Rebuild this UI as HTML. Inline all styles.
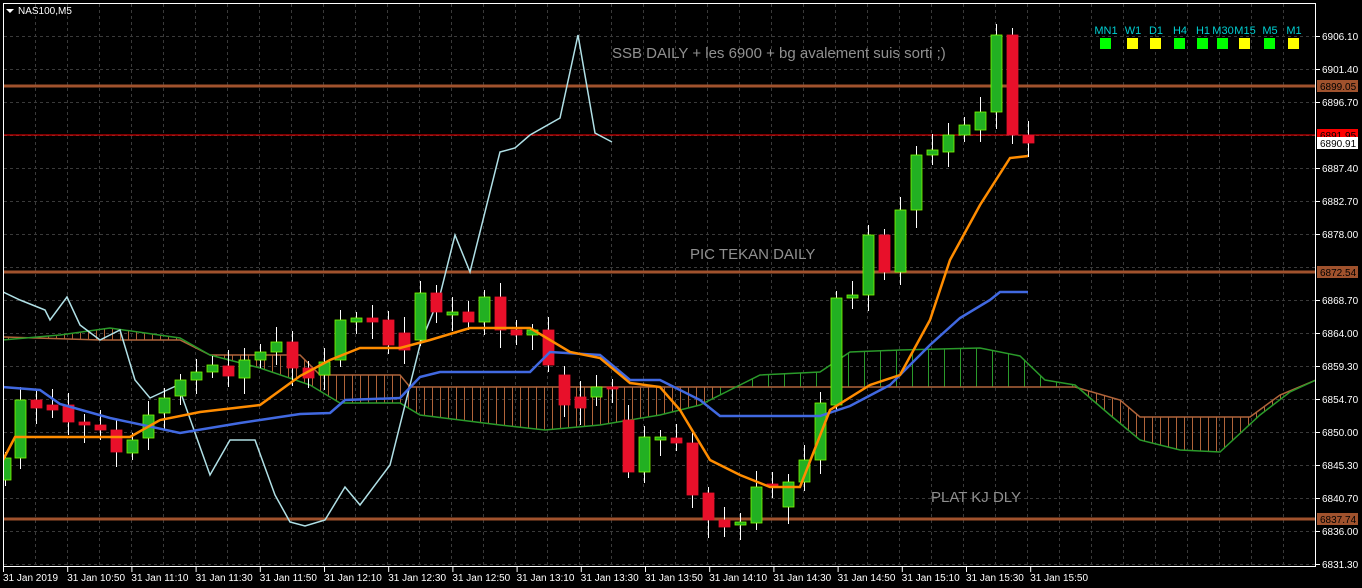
<!DOCTYPE html>
<html><head><meta charset="utf-8"><style>
html,body{margin:0;padding:0;background:#000;width:1362px;height:588px;overflow:hidden}
svg{display:block}
text{font-family:"Liberation Sans",sans-serif}
</style></head><body>
<svg id="s" width="1362" height="588" xmlns="http://www.w3.org/2000/svg">
<defs>
<pattern id="hb" width="8" height="10" patternUnits="userSpaceOnUse"><rect x="0" width="1" height="10" fill="#b0643a"/></pattern>
<pattern id="hg" width="16" height="10" patternUnits="userSpaceOnUse"><rect x="0" width="1" height="10" fill="#2a9a2a"/></pattern>
<clipPath id="cl"><rect x="4" y="4" width="1311" height="562"/></clipPath>
<clipPath id="cL"><rect x="4" y="4" width="716" height="562"/><rect x="1075" y="4" width="240" height="562"/></clipPath>
<clipPath id="cR"><rect x="720" y="4" width="355" height="562"/></clipPath>
</defs>
<g id="grid"></g>
<g clip-path="url(#cl)" id="chart"></g>
<rect x="3.5" y="3.5" width="1312" height="563" fill="none" stroke="#fff" stroke-width="1"/>
<path d="M6 9h8l-4 4z" fill="#fff"/>
<text x="18" y="14" font-size="10" fill="#fff">NAS100,M5</text>
<g id="ax"></g>
</svg>
<script>
var S=document.getElementById('s'),NS='http://www.w3.org/2000/svg';
function el(p,t,a,txt){var e=document.createElementNS(NS,t);for(var k in a)e.setAttribute(k,a[k]);if(txt!=null)e.textContent=txt;document.getElementById(p).appendChild(e);return e;}
for(var x=35;x<1315;x+=32)el('grid','line',{x1:x+.5,y1:4,x2:x+.5,y2:566,stroke:'#3a3a3a','stroke-dasharray':'3,3'});
var hy=[36,69,102,135,168,201,234,267,300,333,366,399,432,465,498,531,564];
hy.forEach(function(y){el('grid','line',{x1:4,y1:y+.5,x2:1315,y2:y+.5,stroke:'#3a3a3a','stroke-dasharray':'3,3'});});
function pl(pts){return pts.map(function(p){return p.join(',')}).join(' ');}
var B=[[3,337],[100,340],[180,340],[210,355],[300,355],[320,375],[400,375],[410,387],[1075,387],[1120,400],[1140,417],[1250,417],[1280,395],[1316,380]];
var A=[[3,340],[60,335],[110,328],[180,338],[210,355],[260,368],[310,385],[340,403],[400,403],[420,415],[500,425],[545,430],[600,425],[660,415],[700,405],[730,390],[760,375],[820,372],[850,352],[900,350],[980,348],[1020,356],[1045,380],[1075,385],[1110,415],[1140,440],[1180,450],[1220,452],[1260,415],[1290,392],[1316,380]];
var poly=A.concat(B.slice().reverse());
el('chart','polygon',{points:pl(poly),fill:'url(#hb)','clip-path':'url(#cL)'});
el('chart','polygon',{points:pl(poly),fill:'url(#hg)','clip-path':'url(#cR)'});
el('chart','polyline',{points:pl(B),fill:'none',stroke:'#b0643a','stroke-width':1.5});
el('chart','polyline',{points:pl(A),fill:'none',stroke:'#2a9a2a','stroke-width':1.5});
[[86,'#a0522d',3],[272,'#a0522d',3],[519,'#a0522d',3],[135,'#ff0000',1]].forEach(function(h){el('chart','line',{x1:4,y1:h[0],x2:1316,y2:h[0],stroke:h[1],'stroke-width':h[2]});});
el('chart','polyline',{points:pl([[3,292],[20,300],[45,310],[50,320],[67,297],[80,325],[100,340],[120,330],[135,380],[150,398],[178,385],[210,475],[230,440],[255,440],[275,495],[290,522],[305,526],[325,520],[345,487],[360,505],[390,465],[420,345],[440,295],[455,235],[470,272],[500,152],[515,148],[530,135],[560,118],[578,35],[595,133],[612,142]]),fill:'none',stroke:'#b0e0e6','stroke-width':1.5});
var C=[[5,480,458],[20,458,400],[36,400,408],[52,405,410],[68,405,422],[84,422,425],[100,425,430],[116,430,452],[132,453,440],[148,438,415],[164,413,398],[180,396,380],[196,380,372],[212,372,365],[228,366,376],[244,378,360],[260,360,352],[276,352,342],[292,342,368],[308,368,378],[324,375,362],[340,360,320],[356,322,318],[372,318,322],[388,320,345],[404,333,350],[420,340,293],[436,293,312],[452,315,312],[468,312,322],[484,322,297],[500,297,330],[516,330,335],[532,335,330],[548,330,365],[564,375,405],[580,397,408],[596,397,387],[612,387,389],[628,420,472],[644,472,437],[660,440,437],[676,438,443],[692,443,495],[708,493,520],[724,520,527],[740,525,522],[756,523,487],[772,484,486],[788,507,482],[804,482,460],[820,460,403],[836,405,298],[852,298,295],[868,295,235],[884,235,272],[900,272,210],[916,210,155],[932,155,150],[948,152,135],[964,135,125],[980,130,112],[996,112,35],[1012,35,135],[1028,135,143]];
C.forEach(function(c,i){var up=c[2]<c[1];var t=Math.min(c[1],c[2]),b=Math.max(c[1],c[2]);if(b-t<2)b=t+2;
var hi=t-6-(i*7%11),lo=b+6+(i*5%13);
el('chart','line',{x1:c[0]+.5,y1:hi,x2:c[0]+.5,y2:lo,stroke:'#fff','stroke-width':1});
el('chart','rect',{x:c[0]-5,y:t,width:11,height:b-t,fill:up?'#22b022':'#e8102a',stroke:up?'#7cfc00':'#e8102a','stroke-width':0.8});});
el('chart','polyline',{points:pl([[3,387],[40,390],[60,404],[110,418],[180,433],[240,423],[260,420],[300,414],[330,413],[345,400],[400,398],[420,377],[440,372],[530,372],[550,352],[600,355],[630,380],[660,380],[700,400],[720,416],[820,416],[850,406],[890,385],[930,345],[960,318],[990,300],[1000,292],[1028,292]]),fill:'none',stroke:'#4169e1','stroke-width':2.5});
el('chart','polyline',{points:pl([[3,460],[15,437],[130,437],[160,420],[200,412],[260,405],[300,376],[330,360],[360,348],[400,348],[430,340],[470,328],[530,328],[570,352],[600,358],[630,383],[660,387],[680,410],[710,460],[740,475],[770,487],[800,487],[830,410],[870,385],[900,375],[930,320],[950,260],[980,205],[1010,158],[1028,156]]),fill:'none',stroke:'#ff8c00','stroke-width':2.5});
el('chart','text',{x:612,y:58,'font-size':15,fill:'#909090'},'SSB DAILY + les 6900 + bg avalement  suis sorti ;)');
el('chart','text',{x:690,y:259,'font-size':15,fill:'#909090'},'PIC TEKAN DAILY');
el('chart','text',{x:931,y:502,'font-size':15,fill:'#909090'},'PLAT KJ DLY');
var L=['MN1','W1','D1','H4','H1','M30','M15','M5','M1'],X=[1106,1133,1156,1180,1203,1223,1245,1270,1294],Cc=['#00ff00','#ffff00','#ffff00','#00ff00','#00ff00','#00ff00','#ffff00','#00ff00','#ffff00'];
L.forEach(function(l,i){el('chart','text',{x:X[i],y:34,'font-size':11,fill:'#00ced1','text-anchor':'middle'},l);el('chart','rect',{x:X[i]-6,y:38,width:11,height:11,fill:Cc[i]});});
var P=[[36,'6906.10'],[69,'6901.40'],[102,'6896.70'],[168,'6887.40'],[201,'6882.70'],[234,'6878.00'],[300,'6868.70'],[333,'6864.00'],[366,'6859.30'],[399,'6854.70'],[432,'6850.00'],[465,'6845.30'],[498,'6840.70'],[531,'6836.00'],[564,'6831.30']];
P.forEach(function(p){el('ax','line',{x1:1316,y1:p[0]+.5,x2:1320,y2:p[0]+.5,stroke:'#fff'});el('ax','text',{x:1322,y:p[0]+4,'font-size':10,fill:'#fff'},p[1]);});
[[86,'6899.05','#a0522d','#000'],[272,'6872.54','#a0522d','#000'],[519,'6837.74','#a0522d','#000'],[135,'6891.95','#ff0000','#000'],[143,'6890.91','#fff','#000']].forEach(function(b){el('ax','rect',{x:1317,y:b[0]-6,width:41,height:12,fill:b[2]});el('ax','text',{x:1320,y:b[0]+4,'font-size':10,fill:b[3]},b[1]);});
var T=['31 Jan 2019','31 Jan 10:50','31 Jan 11:10','31 Jan 11:30','31 Jan 11:50','31 Jan 12:10','31 Jan 12:30','31 Jan 12:50','31 Jan 13:10','31 Jan 13:30','31 Jan 13:50','31 Jan 14:10','31 Jan 14:30','31 Jan 14:50','31 Jan 15:10','31 Jan 15:30','31 Jan 15:50'];
T.forEach(function(t,i){var x=3+i*64.2;el('ax','line',{x1:x+.5,y1:567,x2:x+.5,y2:572,stroke:'#fff'});el('ax','text',{x:x,y:581,'font-size':10,fill:'#fff'},t);});
</script>
</body></html>
